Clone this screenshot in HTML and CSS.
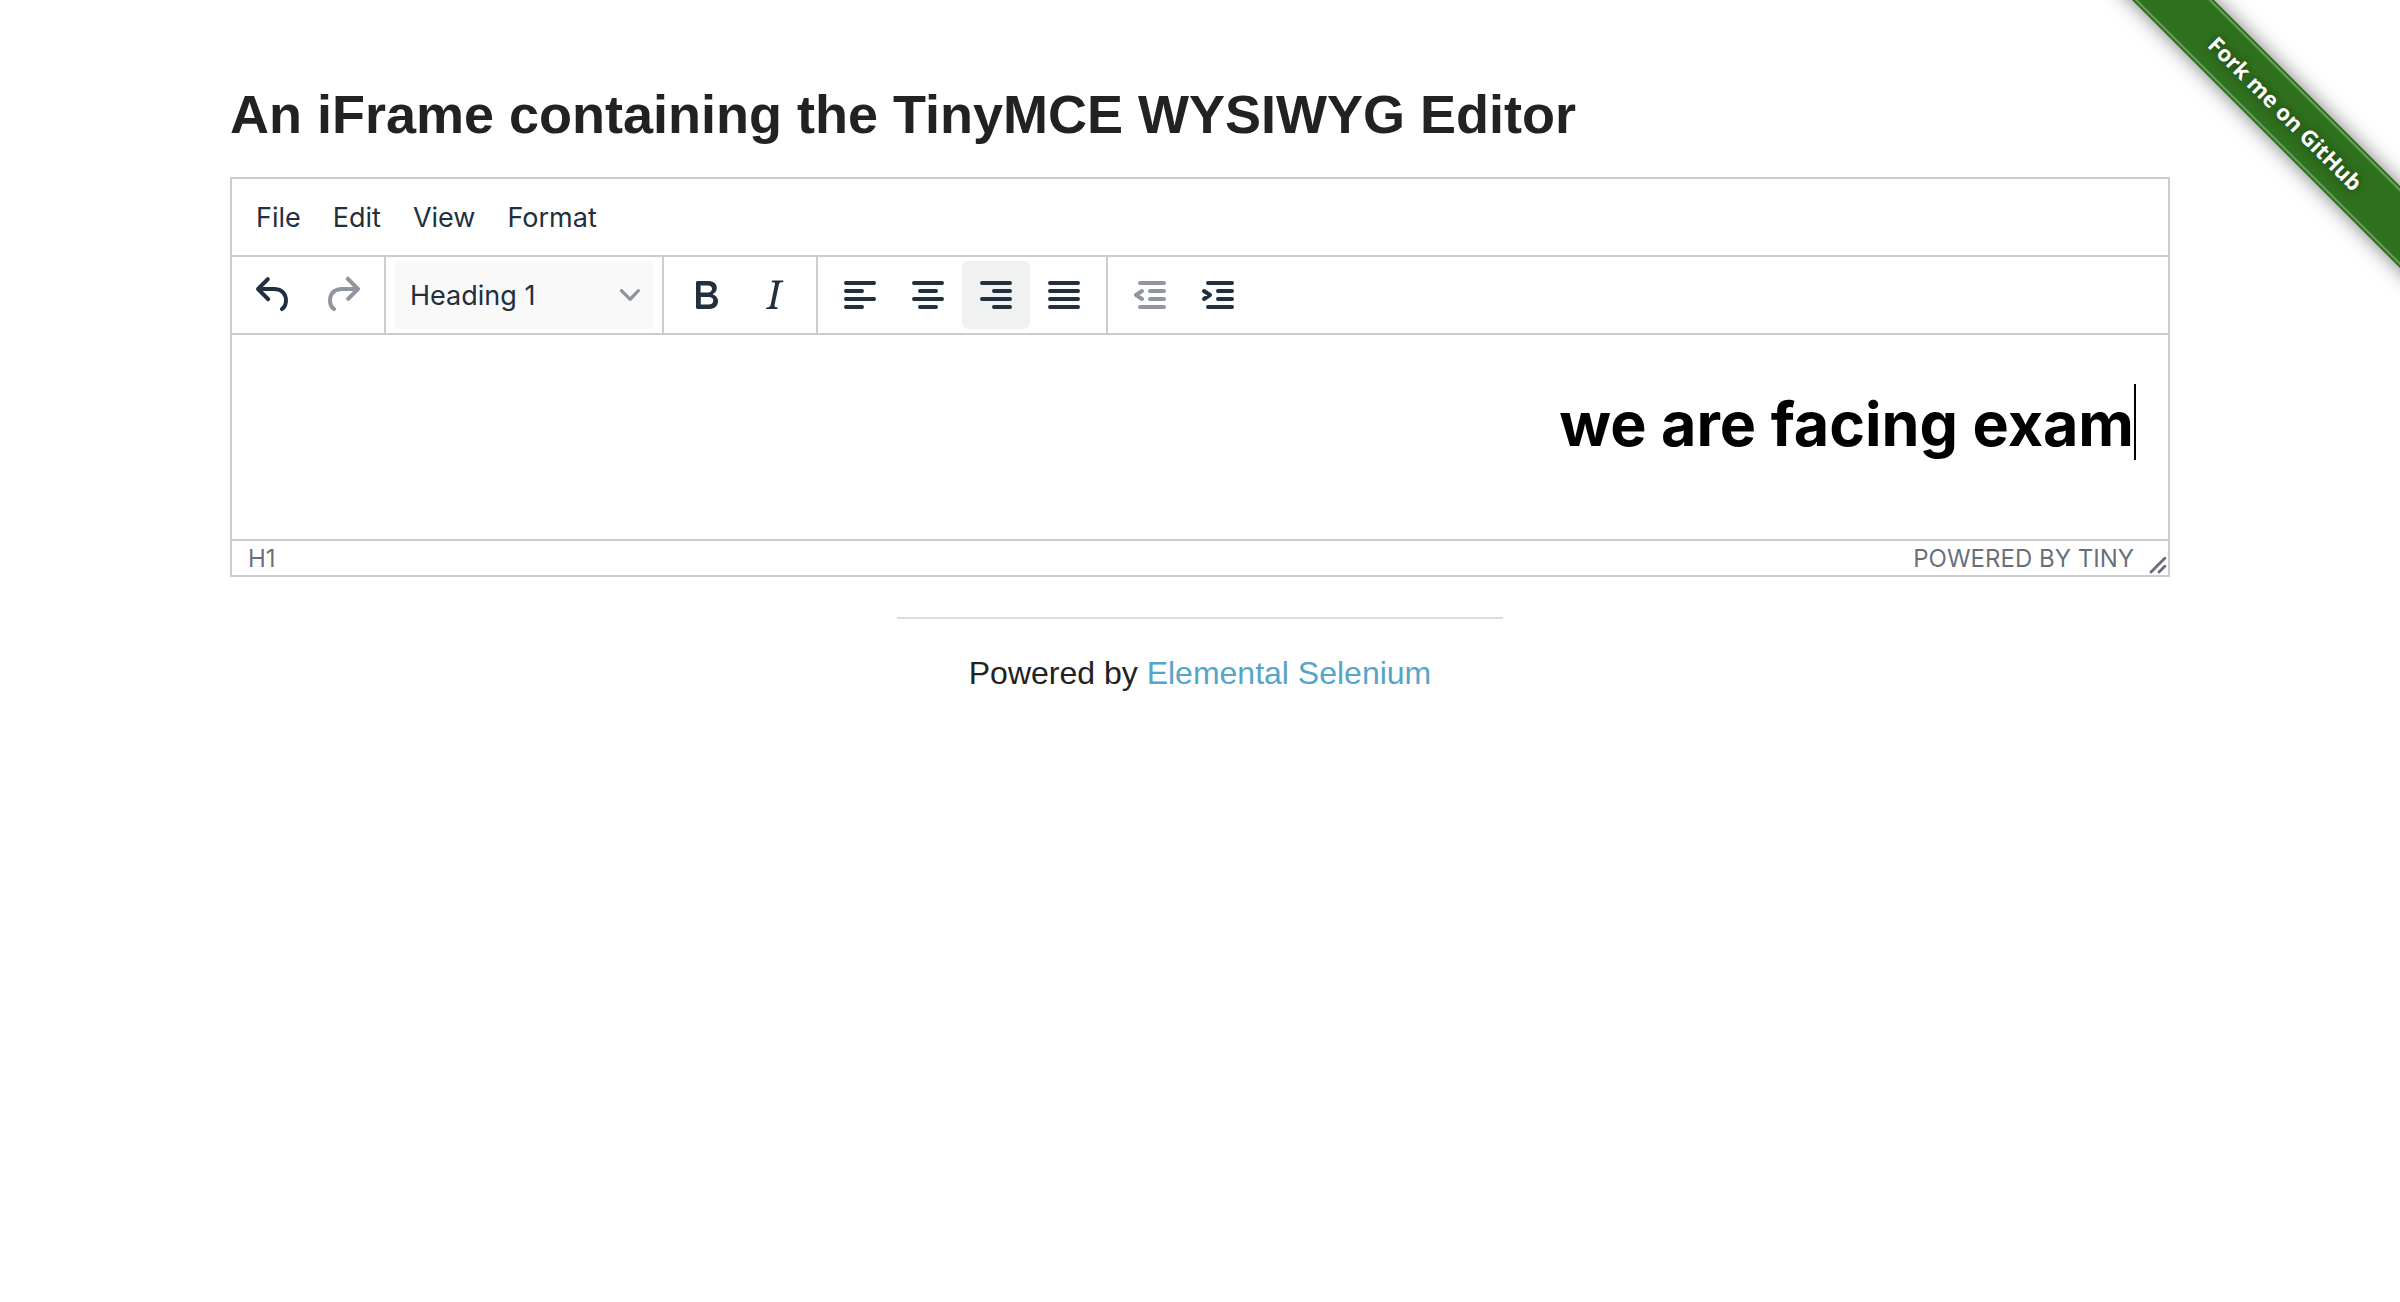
FILE: index.html
```html
<!DOCTYPE html>
<html lang="en">
<head>
<meta charset="utf-8">
<title>The Internet</title>
<link rel="stylesheet" href="styles.css">
</head>
<body>
<div class="ribbon-corner">
  <a class="ribbon" href="#fork"><span class="ribbon-label">Fork me on GitHub</span></a>
</div>
<main class="page">
  <h3 class="page-title">An iFrame containing the TinyMCE WYSIWYG Editor</h3>
  <section class="editor" aria-label="Rich text editor">
    <nav class="menubar">
      <button class="menu" type="button">File</button>
      <button class="menu" type="button">Edit</button>
      <button class="menu" type="button">View</button>
      <button class="menu" type="button">Format</button>
    </nav>
    <div class="toolbar" role="toolbar" aria-label="Formatting">
      <div class="group">
        <button class="tool" type="button" aria-label="Undo"><svg class="icon" viewBox="0 0 24 24"><path d="M6.4 8H12c3.7 0 6.2 2 6.8 5.1.6 2.7-.4 5.6-2.3 6.8a1 1 0 01-1-1.8c1.1-.6 1.8-2.7 1.4-4.6-.5-2.1-2.1-3.5-4.9-3.5H6.4l3.3 3.3a1 1 0 11-1.4 1.4l-5-5a1 1 0 010-1.4l5-5a1 1 0 011.4 1.4L6.4 8z"/></svg></button>
        <button class="tool" type="button" aria-label="Redo" disabled><svg class="icon" viewBox="0 0 24 24"><path d="M17.6 10H12c-2.8 0-4.4 1.4-4.9 3.5-.4 2 .3 4 1.4 4.6a1 1 0 11-1 1.8c-2-1.2-2.9-4.1-2.3-6.8.6-3 3-5.1 6.8-5.1h5.6l-3.3-3.3a1 1 0 111.4-1.4l5 5a1 1 0 010 1.4l-5 5a1 1 0 01-1.4-1.4l3.3-3.3z"/></svg></button>
      </div>
      <div class="group">
        <div class="picker">
          <select class="picker-select" aria-label="Block format">
            <option>Heading 1</option>
            <option>Heading 2</option>
            <option>Paragraph</option>
          </select>
          <svg class="chevron" viewBox="0 0 10 10"><path d="M8.7 2.2c.3-.3.8-.3 1 0 .4.4.4.9 0 1.2L5.7 7.8c-.3.3-.9.3-1.2 0L.2 3.4a.8.8 0 010-1.2c.3-.3.8-.3 1.1 0L5 6l3.7-3.8z"/></svg>
        </div>
      </div>
      <div class="group">
        <button class="tool" type="button" aria-label="Bold"><svg class="icon" viewBox="0 0 24 24"><path d="M7.8 19c-.3 0-.5 0-.6-.2l-.2-.5V5.7c0-.2 0-.4.2-.5l.6-.2h5c1.5 0 2.7.3 3.5 1 .7.6 1.1 1.4 1.1 2.5a3 3 0 01-.6 1.9c-.4.6-1 1-1.6 1.2.4.1.9.3 1.3.6s.8.7 1 1.2c.4.4.5 1 .5 1.6 0 1.3-.4 2.3-1.3 3-.8.7-2.1 1-3.8 1H7.8zm5-8.3c.6 0 1.2-.1 1.6-.5.4-.3.6-.7.6-1.3 0-1.1-.8-1.7-2.3-1.7H9.3v3.5h3.4zm.5 6c.7 0 1.3-.1 1.7-.4.4-.4.6-.9.6-1.5s-.2-1-.7-1.4c-.4-.3-1-.4-2-.4H9.4v3.8h4z"/></svg></button>
        <button class="tool" type="button" aria-label="Italic"><svg class="icon" viewBox="0 0 24 24"><path d="M16.7 4.7l-.1.9h-.3c-.6 0-1 0-1.4.3-.3.3-.4.6-.5 1.1l-2.1 9.8v.6c0 .5.4.8 1.4.8h.2l-.2.8H8l.2-.8h.2c1.1 0 1.8-.5 2-1.5l2-9.8.1-.5c0-.6-.4-.8-1.4-.8h-.3l.2-.9h5.8z"/></svg></button>
      </div>
      <div class="group">
        <button class="tool" type="button" aria-label="Align left"><svg class="icon lines" viewBox="0 0 24 24"><path d="M5 6h14M5 10h8M5 14h14M5 18h8"/></svg></button>
        <button class="tool" type="button" aria-label="Align center"><svg class="icon lines" viewBox="0 0 24 24"><path d="M5 6h14M8 10h8M5 14h14M8 18h8"/></svg></button>
        <button class="tool active" type="button" aria-label="Align right" aria-pressed="true"><svg class="icon lines" viewBox="0 0 24 24"><path d="M5 6h14M11 10h8M5 14h14M11 18h8"/></svg></button>
        <button class="tool" type="button" aria-label="Justify"><svg class="icon lines" viewBox="0 0 24 24"><path d="M5 6h14M5 10h14M5 14h14M5 18h14"/></svg></button>
      </div>
      <div class="group">
        <button class="tool" type="button" aria-label="Decrease indent" disabled><svg class="icon lines" viewBox="0 0 24 24"><path d="M7 6h12M12 10h7M12 14h7M7 18h12M8 10l-3 2 3 2"/></svg></button>
        <button class="tool" type="button" aria-label="Increase indent"><svg class="icon lines" viewBox="0 0 24 24"><path d="M7 6h12M12 10h7M12 14h7M7 18h12M5 10l3 2-3 2"/></svg></button>
      </div>
    </div>
    <div class="content" contenteditable="true" role="textbox" aria-label="Document" spellcheck="false"><h1 class="content-heading">we are facing exam<span class="caret"></span></h1></div>
    <footer class="statusbar">
      <span>H1</span>
      <a class="brand" href="#tiny">POWERED BY TINY</a>
      <svg class="resize" viewBox="0 0 10 10"><path d="M8.1 1.1A.5.5 0 119 2l-7 7A.5.5 0 111 8l7-7zM8.1 5.1A.5.5 0 119 6l-3 3A.5.5 0 115 8l3-3z"/></svg>
    </footer>
  </section>
  <footer class="page-footer">
    <hr class="rule">
    <div>Powered by <a class="credit" href="#selenium">Elemental Selenium</a></div>
  </footer>
</main>
</body>
</html>
```
FILE: styles.css
```css
* { box-sizing: border-box; }

body {
  margin: 0;
  background: #fff;
  color: #222;
  font: 32px/48px "Liberation Sans", Arial, sans-serif;
}

a { text-decoration: none; }

.page {
  max-width: 2000px;
  margin: 0 auto;
  padding: 76px 30px 0;
}

.page-title {
  margin: 0 0 24px;
  font-size: 54px;
  line-height: 77px;
  font-weight: 700;
}

.editor {
  border: 2px solid #ccc;
  color: #222f3e;
  font: 27px/36px Inter, sans-serif;
}

.menubar {
  display: flex;
  align-items: center;
  height: 76px;
  padding: 2px 8px 0;
}

.menu {
  height: 56px;
  padding: 0 16px;
  border: 0;
  background: none;
  color: inherit;
  font: inherit;
}

.toolbar {
  display: flex;
  height: 80px;
  border-top: 2px solid #ccc;
  border-bottom: 2px solid #ccc;
}

.group {
  display: flex;
  align-items: center;
  padding: 0 8px;
  border-right: 2px solid #ccc;
}

.group:last-child { border-right: 0; }

.tool {
  display: grid;
  place-items: center;
  width: 68px;
  height: 68px;
  padding: 0;
  border: 0;
  border-radius: 6px;
  background: none;
  color: #222f3e;
}

.tool:disabled { opacity: 0.5; }

.tool.active { background: #f0f2f2; }

.icon {
  width: 48px;
  height: 48px;
  fill: currentColor;
}

.lines {
  fill: none;
  stroke: currentColor;
  stroke-width: 2;
  stroke-linecap: round;
  stroke-linejoin: round;
}

.picker {
  display: grid;
  align-items: center;
  width: 260px;
}

.picker > * { grid-area: 1 / 1; }

.picker-select {
  appearance: none;
  width: 100%;
  height: 68px;
  padding: 2px 16px 0;
  border: 0;
  border-radius: 6px;
  background: #f9f9f9;
  color: inherit;
  font: inherit;
}

.chevron {
  justify-self: end;
  width: 20px;
  height: 20px;
  margin-right: 14px;
  fill: #222f3e;
  opacity: 0.5;
  pointer-events: none;
}

.content {
  min-height: 204px;
  padding: 44px 32px;
  outline: 0;
  color: #000;
  text-align: right;
}

.content-heading {
  display: flex;
  align-items: center;
  justify-content: flex-end;
  margin: 0;
  font-size: 61px;
  line-height: 90px;
  font-weight: 700;
}

.caret {
  width: 2px;
  height: 76px;
  margin-bottom: 4px;
  background: #000;
}

.statusbar {
  display: flex;
  align-items: center;
  height: 36px;
  padding: 2px 0 0 16px;
  border-top: 2px solid #ccc;
  color: rgba(34, 47, 62, 0.7);
  font-size: 24px;
}

.brand {
  margin-left: auto;
  color: inherit;
}

.resize {
  align-self: flex-end;
  width: 20px;
  height: 20px;
  margin-left: 14px;
  fill: currentColor;
}

.page-footer {
  padding-top: 40px;
  text-align: center;
}

.rule {
  width: 606px;
  max-width: 100%;
  margin: 0 auto 30px;
  border: 0;
  border-top: 2px solid #ddd;
}

.credit { color: #55a5ca; }

.ribbon-corner {
  position: absolute;
  top: 0;
  right: 0;
  width: 298px;
  height: 298px;
  overflow: hidden;
}

.ribbon {
  position: absolute;
  top: 84px;
  right: -116px;
  display: flex;
  align-items: center;
  width: 460px;
  height: 58px;
  background: #2f701e;
  box-shadow: 0 0 20px rgba(0, 0, 0, 0.5);
  transform: rotate(45deg);
  color: #fff;
  font: 700 22px/50px "Open Sans", sans-serif;
}

.ribbon-label {
  flex: 1;
  border-top: 2px solid #62a257;
  border-bottom: 2px solid #62a257;
  text-align: center;
  text-shadow: 0 0 8px rgba(0, 0, 0, 0.5);
}
```
